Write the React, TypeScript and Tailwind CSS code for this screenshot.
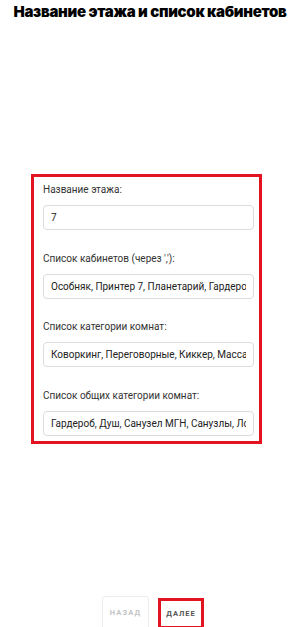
import React from 'react'

const fields = [
  { label: 'Название этажа:', value: '7' },
  { label: "Список кабинетов (через ','):", value: 'Особняк, Принтер 7, Планетарий, Гардероб, Душ' },
  { label: 'Список категории комнат:', value: 'Коворкинг, Переговорные, Киккер, Массажная' },
  { label: 'Список общих категории комнат:', value: 'Гардероб, Душ, Санузел МГН, Санузлы, Лобби' },
]

export default function App() {
  return (
    <div className="w-full h-screen overflow-hidden bg-white font-['Roboto',sans-serif] text-[#333]">
      <h1 className="pt-[1px] text-center text-[15px] leading-[22px] font-black tracking-[-0.3px] text-black font-['Inter',sans-serif]">
        Название этажа и список кабинетов
      </h1>

      <div className="mt-[151px] ml-[31px] w-[231px] h-[270px] border-[3px] border-[#e3141f] pl-[9px] pr-[5px] pt-[5px]">
        {fields.map((f) => (
          <div key={f.label} className="h-[68.7px]">
            <label className="block text-[10px] leading-[16px] text-[#333]">{f.label}</label>
            <input
              readOnly
              value={f.value}
              className="mt-[7px] block w-full h-[25px] rounded-[4px] border border-[#dcdcdc] px-[7px] text-[10px] text-[#222] outline-none"
            />
          </div>
        ))}
      </div>

      <div className="mt-[152px] flex justify-center gap-[9px] pl-[6px]">
        <button className="h-[34px] w-[47px] rounded-[3px] border border-[#ececec] text-[7.5px] font-bold tracking-[1.2px] text-[#c4c4c4]">
          НАЗАД
        </button>
        <button className="h-[31px] mt-[2px] w-[46px] border-[3px] border-[#e3141f] text-[7.5px] font-bold tracking-[1px] text-[#555]">
          ДАЛЕЕ
        </button>
      </div>
    </div>
  )
}
